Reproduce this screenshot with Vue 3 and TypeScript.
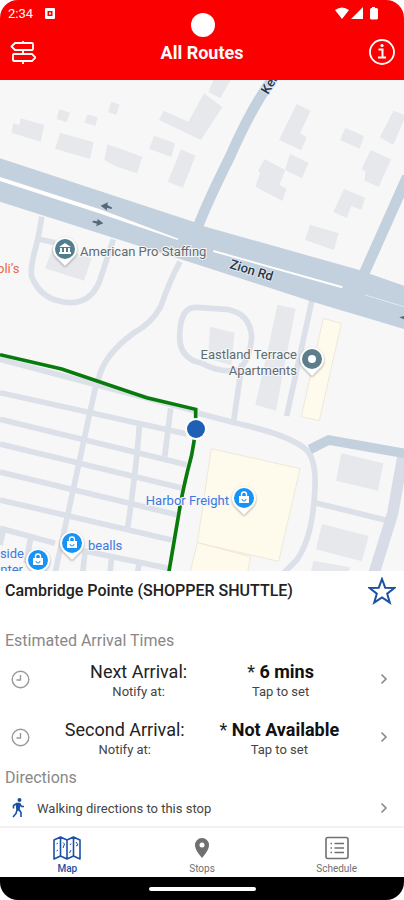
<script setup lang="ts">
import { ref } from 'vue'

interface Arrival {
  label: string
  value: string
}

interface Label {
  text: string
  x: number
  y: number
  tone: string
  anchor: 'start' | 'end'
}

const arrivals: Arrival[] = [
  { label: 'Next Arrival:', value: '6 mins' },
  { label: 'Second Arrival:', value: 'Not Available' },
]

const tabs = ['Map', 'Stops', 'Schedule'] as const
const activeTab = ref<string>('Map')
const favourite = ref(false)

/* Shapes are drawn on a grid three times finer than the labels. */
const buildings: string[] = [
  '62,115 133,135 122,185 34,158 40,130 58,135',
  '178,88 210,98 200,127 170,117',
  '262,103 293,112 286,138 254,128',
  '334,65 359,74 349,105 324,96',
  '180,158 281,187 270,237 165,206',
  '322,193 427,230 411,280 345,258 313,240',
  '462,167 525,190 514,231 448,206',
  '543,208 587,227 548,323 503,305',
  '490,92 565,125 612,40 667,82 603,180 477,120',
  '640,0 692,0 661,54 625,36',
  '890,72 932,92 900,160 920,172 904,211 837,180',
  '1036,144 1092,168 1079,206 1020,180',
  '1181,92 1212,104 1212,120 1180,194 1139,172',
  '870,222 926,248 906,295 855,270',
  '794,238 856,270 838,314 860,326 847,363 766,320 780,280 774,272',
  '1112,210 1173,238 1136,321 1094,302 1096,275 1085,266',
  '1032,327 1096,354 1084,390 1054,378 1040,414 1000,396',
  '930,434 1016,460 1002,510 915,480',
  '160,500 275,535 252,602 135,565',
  '832,674 887,686 846,894 828,992 766,974 808,790',
  '630,740 704,758 694,856 624,836',
  '1024,1120 1150,1150 1134,1232 1008,1202',
  '966,1332 1106,1368 1086,1444 948,1408',
  '940,1442 1050,1462 1044,1480 932,1480',
]

const shops: string[] = [
  '970,715 1024,730 958,1022 904,1010',
  '634,1106 900,1166 836,1444 592,1388',
  '592,1388 752,1430 742,1480 570,1480',
]

const lanes: string[] = [
  'M125 410 Q120 450 108 500 Q90 560 95 590 Q125 665 210 668 Q275 668 300 600 L340 478',
  'M112 476 L165 488',
  'M540 545 Q510 600 482 680 Q455 730 400 760 Q310 825 295 900',
  'M290 905 L165 1480',
  'M0 838 L595 995',
  'M0 938 L560 1062',
  'M0 1018 L560 1154',
  'M0 1092 L545 1224',
  'M0 1176 L530 1304',
  'M0 1260 L515 1380',
  'M0 1345 L165 1390 M250 1412 L505 1465',
  'M512 985 L494 1130',
  'M418 1035 Q410 1160 382 1350',
  'M10 1350 L0 1395',
  'M92 1375 L78 1450 M255 1415 L248 1480 M335 1430 L330 1480 M418 1448 L412 1480',
  'M595 1000 L710 1030 Q870 1065 920 1110 Q948 1140 945 1220 Q940 1370 890 1440 L850 1480',
  'M700 1030 L726 850',
  'M606 850 Q530 835 540 750 Q545 680 590 682 L680 688 Q750 700 755 770 Q750 840 715 870 Q660 880 606 850',
  'M936 660 L860 1008',
  'M945 1268 L1165 1322',
]

const labels: Label[] = [
  { text: 'American Pro Staffing', x: 80, y: 176, tone: 'place', anchor: 'start' },
  { text: 'oli’s', x: -3, y: 193, tone: 'food', anchor: 'start' },
  { text: 'Eastland Terrace', x: 297, y: 279, tone: 'place', anchor: 'end' },
  { text: 'Apartments', x: 297, y: 295, tone: 'place', anchor: 'end' },
  { text: 'Harbor Freight', x: 229, y: 425, tone: 'shop', anchor: 'end' },
  { text: 'bealls', x: 88, y: 470, tone: 'shop', anchor: 'start' },
  { text: 'side', x: 24, y: 478, tone: 'shop', anchor: 'end' },
  { text: 'nter', x: 23, y: 494, tone: 'shop', anchor: 'end' },
]

const shopPins = [
  { x: 244, y: 418 },
  { x: 72, y: 463 },
  { x: 38, y: 480 },
]
</script>

<template>
  <div class="phone">
    <header class="top">
      <div class="status">
        <span>2:34</span>
        <svg width="10" height="11" viewBox="0 0 10 11" aria-hidden="true">
          <path fill="#fff" fill-rule="evenodd" d="M1 0h8q1 0 1 1v9q0 1-1 1H1q-1 0-1-1V1q0-1 1-1zM2.500 3v5h5V3z" />
          <path fill="#fff" d="M4 4.500h2v2H4z" />
        </svg>
        <svg class="signals" width="44" height="14" viewBox="0 0 44 14" aria-hidden="true">
          <path fill="#fff" d="M0 4Q7-1 14 4L7 13zM28 1v12H16zM37 1h3v1h1.500q1.500 0 1.500 1.500v8.500q0 1.500-1.500 1.500h-5q-1.500 0-1.500-1.500v-8.500Q35 2 36.500 2H37z" />
        </svg>
      </div>
      <span class="camera"></span>
      <div class="bar">
        <button class="icon-button" type="button" aria-label="Routes">
          <svg width="26" height="26" viewBox="0 0 26 26" fill="none" stroke="#fff" stroke-width="1.800" stroke-linejoin="round">
            <path d="M13 1v2M13 10v4M13 21v3M5 3h17q1 0 1 1v5q0 1-1 1H5L1.500 6.500zM4 14h18l3.500 3.500L22 21H4q-1 0-1-1v-5q0-1 1-1z" />
          </svg>
        </button>
        <h1>All Routes</h1>
        <button class="icon-button" type="button" aria-label="Information">
          <svg width="28" height="28" viewBox="0 0 28 28" fill="none" stroke="#fff">
            <circle cx="14" cy="13" r="12" stroke-width="1.800" />
            <path d="M10.500 10.500h4V18M10 18.500h8" stroke-width="2" />
            <circle cx="14" cy="6.500" r="1.600" fill="#fff" stroke="none" />
          </svg>
        </button>
      </div>
    </header>

    <main>
      <section class="map" aria-label="Route map">
        <svg viewBox="0 0 404 491" preserveAspectRatio="xMidYMid slice">
          <g transform="scale(.33333)">
            <polygon v-for="b in buildings" :key="b" :points="b" fill="#e6e8ec" />
            <polygon v-for="s in shops" :key="s" :points="s" fill="#fefbed" stroke="#eee8d8" stroke-width="3" />
            <path v-for="l in lanes" :key="l" :d="l" fill="none" stroke="#dce0e8" stroke-width="17" stroke-linejoin="round" />
            <path d="M1212 1110L1178 1300L1122 1480" fill="none" stroke="#d8dce6" stroke-width="34" />
            <g fill="none" stroke="#c3d0dd">
              <path d="M930 1108L986 1080L1212 1120" stroke-width="29" />
              <path d="M830-20Q760 70 690 230Q620 370 590 450" stroke-width="31" />
              <path d="M1222 290L1088 590" stroke-width="32" />
            </g>
            <path d="M0 235L580 425L606 437L1070 568L1212 617V747L930 663L606 558L0 365z" fill="#c3d0dd" />
            <path d="M0 291L300 388L535 476L533 480L295 399L0 303z" fill="#fff" />
            <path d="M640 513L1027 622" stroke="#fff" stroke-width="6" fill="none" />
            <path d="M1095 645L1212 680" stroke="#e2e8ef" stroke-width="3" fill="none" />
            <g fill="#53687d">
              <path d="M302 377L324 367L322 375L337 383L334 387L320 383L322 392z" />
              <path d="M310 430L288 439L291 431L277 427L279 422L293 424L292 416z" />
              <path d="M1198 712L1212 708V718z" />
            </g>
            <path d="M0 824L185 867L440 953L587 988V1045Q582 1090 575 1125Q550 1220 540 1280L506 1480" fill="none" stroke="#087b0c" stroke-width="11" />
          </g>

          <text v-for="l in labels" :key="l.text" class="label" :class="l.tone" :x="l.x" :y="l.y" :text-anchor="l.anchor">{{ l.text }}</text>
          <text class="road" transform="translate(229 188) rotate(17)">Zion Rd</text>
          <text class="road" transform="translate(268 15) rotate(-59)">Kerr</text>

          <circle cx="196" cy="349" r="11" fill="#fff" />
          <circle cx="196" cy="349" r="9" fill="#1f60b5" />

          <g transform="translate(65 169)">
            <path class="drop" d="M0 17L-7 10A12 12 0 1 1 7 10z" />
            <circle r="10" fill="#527f8e" />
            <path d="M-6-2L0-6L6-2zM-6 3h12v2H-6zM-5-1h2v4h-2zM-1-1h2v4h-2zM3-1h2v4H3z" fill="#fff" />
          </g>
          <g transform="translate(312 279)">
            <path class="drop" d="M0 17L-7 10A12 12 0 1 1 7 10z" />
            <circle r="10" fill="#5e7d8b" />
            <circle r="4" fill="#fff" />
          </g>
          <g v-for="p in shopPins" :key="p.x" :transform="`translate(${p.x} ${p.y})`">
            <path class="drop" d="M0 17L-7 10A12 12 0 1 1 7 10z" />
            <circle r="10" fill="#1693f5" />
            <path d="M-5-2H5V5H-5z" fill="#fff" />
            <path d="M-2.500-2V-3.500a2.500 2.500 0 0 1 5 0V-2" fill="none" stroke="#fff" stroke-width="1.400" />
            <path d="M-2 1a2 2 0 0 0 4 0" fill="none" stroke="#1693f5" />
          </g>
        </svg>
      </section>

      <section class="sheet">
        <div class="stop">
          <h2>Cambridge Pointe (SHOPPER SHUTTLE)</h2>
          <button class="icon-button" type="button" aria-label="Favourite" :aria-pressed="favourite" @click="favourite = !favourite">
            <svg width="28" height="28" viewBox="0 0 28 28">
              <path d="M14 2L17.200 10.700L26.500 11L19.200 16.700L21.800 25.600L14 20.400L6.200 25.600L8.800 16.700L1.500 11L10.800 10.700z" :fill="favourite ? '#1b50a5' : 'none'" stroke="#1b50a5" stroke-width="2" />
            </svg>
          </button>
        </div>

        <h3>Estimated Arrival Times</h3>
        <div class="arrivals">
          <button v-for="a in arrivals" :key="a.label" class="row" type="button">
            <svg width="19" height="19" viewBox="0 0 19 19" fill="none" stroke="#999" stroke-width="1.400" aria-hidden="true">
              <circle cx="9.500" cy="9.500" r="8.300" />
              <path d="M9.500 5v5H5.500" />
            </svg>
            <span class="columns">
              <span class="column">
                <span class="big">{{ a.label }}</span>
                <span class="small">Notify at:</span>
              </span>
              <span class="column">
                <span class="big">* <b>{{ a.value }}</b></span>
                <span class="small">Tap to set</span>
              </span>
            </span>
            <svg class="chevron" width="8" height="12" viewBox="0 0 8 12" aria-hidden="true"><path d="M1.500 1.500L6 6L1.500 10.500" /></svg>
          </button>
        </div>

        <h3 class="directions">Directions</h3>
        <button class="row walk" type="button">
          <svg width="14" height="20" viewBox="0 0 14 20" fill="none" stroke="#1b50a5" stroke-width="1.600" stroke-linejoin="round" aria-hidden="true">
            <circle cx="8.500" cy="2" r="2" fill="#1b50a5" stroke="none" />
            <path d="M5.500 5.500h3L8 12H6z" fill="#1b50a5" />
            <path d="M6 5.500L2.500 7.500V10.500M8.500 5.500L10.500 8.500H13M6 12L5 15.500L2 19M8 11.500L10 14.500V19" />
          </svg>
          <span class="walk-text">Walking directions to this stop</span>
          <svg class="chevron" width="8" height="12" viewBox="0 0 8 12" aria-hidden="true"><path d="M1.500 1.500L6 6L1.500 10.500" /></svg>
        </button>
      </section>
    </main>

    <nav class="tabs">
      <button v-for="t in tabs" :key="t" type="button" :class="{ active: t === activeTab }" @click="activeTab = t">
        <svg v-if="t === 'Map'" width="28" height="24" viewBox="0 0 28 24" fill="none" stroke="currentColor" stroke-width="1.600" stroke-linejoin="round">
          <path d="M1 4L7.500 1L14 4L20.500 1L27 4V23L20.500 20L14 23L7.500 20L1 23zM7.500 1V20M14 4V23M20.500 1V20" />
          <path d="M3.500 8L5 7M3.500 15L5 14M10 6.500L11.500 8L10 12M17 9L18 7.500M16.500 17L18 14M23 6L25 9L23 10" stroke-width="1" />
        </svg>
        <svg v-else-if="t === 'Stops'" width="28" height="24" viewBox="0 0 28 24">
          <path fill="currentColor" fill-rule="evenodd" d="M14 2a7 7 0 0 1 7 7.500Q21 14 14 22Q7 14 7 9.500A7 7 0 0 1 14 2zM14 6.500a2.500 2.500 0 1 0 0 5a2.500 2.500 0 1 0 0-5z" />
        </svg>
        <svg v-else width="28" height="24" viewBox="0 0 28 24" fill="none" stroke="currentColor" stroke-width="1.600">
          <rect x="3" y="1.500" width="22" height="21" rx="2" />
          <path d="M11.500 7.500H21M11.500 12H21M11.500 16.500H21M7.500 7.500H9M7.500 12H9M7.500 16.500H9" stroke-width="1.500" />
        </svg>
        <span>{{ t }}</span>
      </button>
    </nav>
    <footer class="home"><span></span></footer>
  </div>
</template>

<style>
body {
  background: #fff;
}
</style>

<style scoped>
.phone {
  display: flex;
  flex-direction: column;
  min-height: 100vh;
  overflow: hidden;
  border-radius: 18px;
  background: #fff;
  color: #222;
  font-family: Roboto, "Liberation Sans", sans-serif;
}

button {
  margin: 0;
  padding: 0;
  border: 0;
  background: none;
  color: inherit;
  font: inherit;
  cursor: pointer;
}

svg {
  display: block;
  flex: none;
}

h1,
h2,
h3 {
  margin: 0;
}

.top {
  position: relative;
  background: #fb0000;
  color: #fff;
}

.status {
  display: flex;
  align-items: center;
  gap: 12px;
  height: 26px;
  padding: 0 25px 0 8px;
  font-size: 13px;
}

.signals {
  margin-left: auto;
}

.camera {
  position: absolute;
  top: 13px;
  left: 50%;
  width: 24px;
  height: 24px;
  margin-left: -11px;
  border-radius: 50%;
  background: #fff;
}

.bar {
  display: flex;
  align-items: center;
  justify-content: space-between;
  height: 54px;
  padding: 0 8px 0 10px;
}

.bar h1 {
  font-size: 18px;
  line-height: 24px;
  font-weight: 700;
}

main {
  display: flex;
  flex: 1;
  flex-direction: column;
}

.map {
  display: flex;
  flex: 1;
  background: #f7f7f8;
}

.map svg {
  flex: 1;
  min-width: 0;
}

.label,
.road {
  font-size: 13px;
  paint-order: stroke;
  stroke: #f7f7f8;
  stroke-width: 2px;
}

.place {
  fill: #5d6b72;
}

.food {
  fill: #e8694a;
}

.shop {
  fill: #3f78e0;
}

.road {
  fill: #26384a;
  font-weight: 500;
  stroke: #dfe7ee;
}

.drop {
  fill: #fff;
  filter: drop-shadow(0 1px 1px #0005);
}

.sheet {
  display: flex;
  flex-direction: column;
}

.stop {
  display: flex;
  align-items: center;
  justify-content: space-between;
  height: 40px;
  padding: 0 8px 0 5px;
}

h2 {
  font-size: 16px;
  line-height: 20px;
  font-weight: 500;
}

h3 {
  padding: 20px 5px 6px;
  color: #888;
  font-size: 16px;
  line-height: 20px;
  font-weight: 400;
}

.arrivals {
  display: flex;
  flex-direction: column;
  gap: 14px;
}

.row {
  display: flex;
  align-items: center;
  height: 44px;
  padding: 0 16px 0 11px;
}

.columns {
  display: flex;
  flex: 1;
  justify-content: space-evenly;
  padding-top: 4px;
}

.column {
  display: flex;
  flex-direction: column;
  align-items: center;
}

.big {
  font-size: 18px;
  line-height: 22px;
}

.big b {
  color: #111;
  font-weight: 700;
}

.small {
  color: #444;
  font-size: 13px;
  line-height: 18px;
}

.chevron {
  margin-left: 6px;
  fill: none;
  stroke: #888;
  stroke-width: 1.6;
}

.directions {
  padding-top: 9px;
  padding-bottom: 2px;
}

.walk {
  gap: 12px;
  height: 36px;
}

.walk-text {
  flex: 1;
  color: #444;
  font-size: 13px;
  text-align: left;
}

.tabs {
  display: flex;
  height: 49px;
  border-top: 2px solid #f2f2f2;
}

.tabs button {
  display: flex;
  flex: 1;
  flex-direction: column;
  align-items: center;
  gap: 3px;
  padding-top: 8px;
  color: #707070;
  font-size: 10px;
  line-height: 12px;
}

.tabs .active {
  color: #1b50a5;
  font-weight: 500;
}

.home {
  display: flex;
  align-items: center;
  justify-content: center;
  height: 23px;
  background: #000;
}

.home span {
  width: 107px;
  height: 4px;
  border-radius: 2px;
  background: #fff;
}
</style>
